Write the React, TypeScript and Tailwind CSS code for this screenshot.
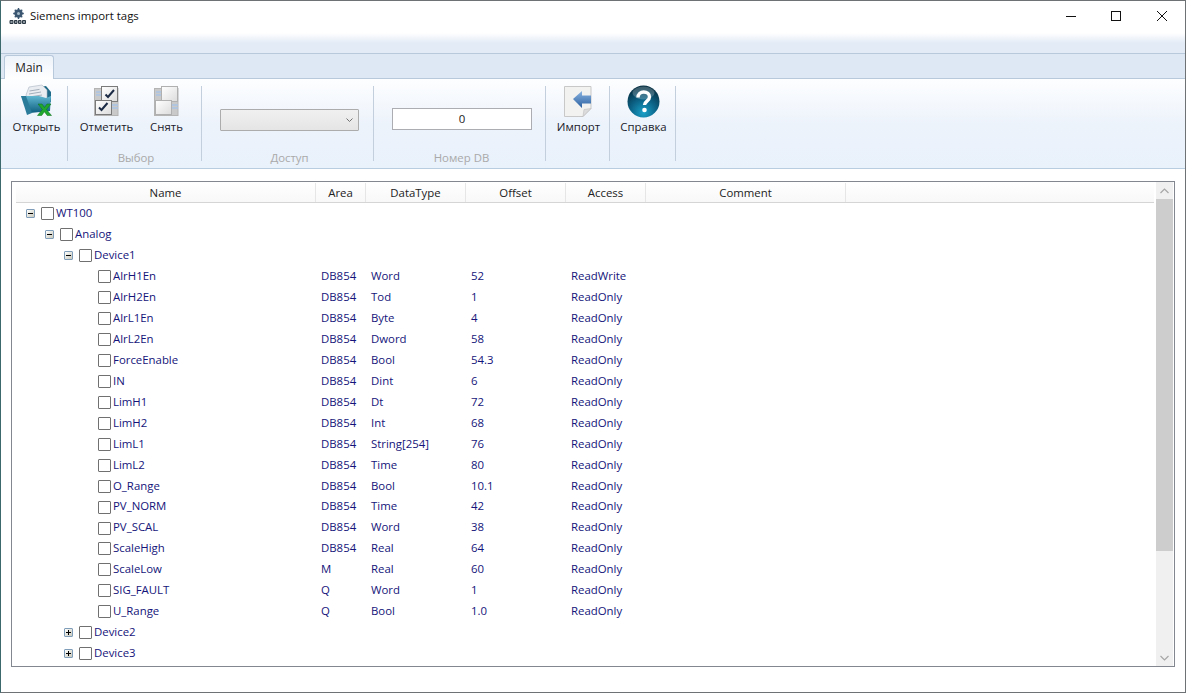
import type { ReactNode } from 'react';

type TagRow = { name: string; area: string; type: string; offset: string; access: string };

const tags: TagRow[] = [
  { name: 'AlrH1En', area: 'DB854', type: 'Word', offset: '52', access: 'ReadWrite' },
  { name: 'AlrH2En', area: 'DB854', type: 'Tod', offset: '1', access: 'ReadOnly' },
  { name: 'AlrL1En', area: 'DB854', type: 'Byte', offset: '4', access: 'ReadOnly' },
  { name: 'AlrL2En', area: 'DB854', type: 'Dword', offset: '58', access: 'ReadOnly' },
  { name: 'ForceEnable', area: 'DB854', type: 'Bool', offset: '54.3', access: 'ReadOnly' },
  { name: 'IN', area: 'DB854', type: 'Dint', offset: '6', access: 'ReadOnly' },
  { name: 'LimH1', area: 'DB854', type: 'Dt', offset: '72', access: 'ReadOnly' },
  { name: 'LimH2', area: 'DB854', type: 'Int', offset: '68', access: 'ReadOnly' },
  { name: 'LimL1', area: 'DB854', type: 'String[254]', offset: '76', access: 'ReadOnly' },
  { name: 'LimL2', area: 'DB854', type: 'Time', offset: '80', access: 'ReadOnly' },
  { name: 'O_Range', area: 'DB854', type: 'Bool', offset: '10.1', access: 'ReadOnly' },
  { name: 'PV_NORM', area: 'DB854', type: 'Time', offset: '42', access: 'ReadOnly' },
  { name: 'PV_SCAL', area: 'DB854', type: 'Word', offset: '38', access: 'ReadOnly' },
  { name: 'ScaleHigh', area: 'DB854', type: 'Real', offset: '64', access: 'ReadOnly' },
  { name: 'ScaleLow', area: 'M', type: 'Real', offset: '60', access: 'ReadOnly' },
  { name: 'SIG_FAULT', area: 'Q', type: 'Word', offset: '1', access: 'ReadOnly' },
  { name: 'U_Range', area: 'Q', type: 'Bool', offset: '1.0', access: 'ReadOnly' },
];

const columns = 'grid grid-cols-[300px_50px_100px_100px_80px_200px]';

function AppLogo() {
  return (
    <svg width="18" height="17" viewBox="0 0 18 17">
      <circle cx="9.5" cy="5.5" r="4.2" fill="#3a5670" />
      <circle cx="9.5" cy="5.5" r="1.5" fill="#a9bccb" />
      <path d="M9.5 0v2M9.5 9v2M4.200 5.500h2M12.800 5.500h2M5.800 1.800l1.400 1.400M11.800 7.800l1.400 1.400M13.200 1.800L11.800 3.200M7.200 7.800L5.800 9.200" stroke="#3a5670" strokeWidth="1.400" />
      <path d="M1 12.500h3v3H1zM5.500 12.500h2.500v3H5.500zM9.500 12.500h2.500v3H9.500zM13.500 12.500h3v3h-3z" fill="#8b959d" stroke="#2c3a46" strokeWidth="1" />
    </svg>
  );
}

function OpenIcon() {
  return (
    <svg width="34" height="34" viewBox="0 0 34 34">
      <defs>
        <linearGradient id="fold" x1="0" y1="0" x2="0" y2="1">
          <stop offset="0" stopColor="#5fb6cf" />
          <stop offset="1" stopColor="#0f5f80" />
        </linearGradient>
      </defs>
      <path d="M12 11L15 4l11 -2 5 6v10H14z" fill="#1e6a88" />
      <path d="M6 11l3-8 13-2 5 5 0 13H10z" fill="#e9edf2" stroke="#aab4bf" strokeWidth="0.6" />
      <path d="M9.500 7l10-1.600M9 10l12-2M9 13l13-2" stroke="#9aa6b3" strokeWidth="0.9" />
      <path d="M1 12l18 0 7 2 5-2 -1 15-20 2z" fill="url(#fold)" />
      <path d="M1 12l6 19 5-2L6 12z" fill="#2b7c9b" />
      <path d="M18 20h4l2.500 3.500L27 20h4l-4.500 5.500L31.500 31.500h-4.300l-2.800-3.700-2.700 3.700H17.500l4.800-6z" fill="#1fa82d" stroke="#0d6d1b" strokeWidth="0.5" />
    </svg>
  );
}

function CheckAllIcon({ checked }: { checked: boolean }) {
  const id = checked ? 'bxa' : 'bxb';
  return (
    <svg width="25" height="30" viewBox="0 0 25 30" className="mb-[2px]">
      <defs>
        <linearGradient id={id} x1="0" y1="0" x2="1" y2="1">
          <stop offset="0" stopColor="#ffffff" />
          <stop offset="1" stopColor="#dcdcdc" />
        </linearGradient>
      </defs>
      <rect x="0.500" y="2.500" width="23.500" height="27" fill="#c9c9c9" stroke="#b4b4b4" />
      <path d="M2 6h5M2 9h5M18 19h6M18 22h6" stroke="#a9c4e6" strokeWidth="1.600" />
      <rect x="7.500" y="0.500" width="16" height="15" fill={`url(#${id})`} stroke={checked ? '#7a7a7a' : '#b0b0b0'} />
      <rect x="1.500" y="14.500" width="16" height="14" fill={`url(#${id})`} stroke={checked ? '#7a7a7a' : '#b0b0b0'} />
      {checked && (
        <>
          <path d="M11.500 8.500l2.500 2.500 6-7" fill="none" stroke="#1c2b45" strokeWidth="2" />
          <path d="M5 21.500l2.500 2.500 6-7" fill="none" stroke="#1c2b45" strokeWidth="2" />
        </>
      )}
    </svg>
  );
}

function ImportIcon() {
  return (
    <svg width="29" height="31" viewBox="0 0 29 31" className="mb-[1px]">
      <defs>
        <linearGradient id="arrow" x1="0" y1="0" x2="0" y2="1">
          <stop offset="0" stopColor="#8ab4e2" />
          <stop offset="1" stopColor="#2a5f9e" />
        </linearGradient>
      </defs>
      <path d="M0.500 0.500h26.500v22l-8 8H0.500z" fill="#f2f2f0" stroke="#c8c8c8" />
      <path d="M19 30.500l1-7 7-1z" fill="#dcdcdc" stroke="#bdbdbd" strokeWidth="0.600" />
      <path d="M9 13l9-8v4.500h9v8h-9V22z" fill="url(#arrow)" />
    </svg>
  );
}

function HelpIcon() {
  return (
    <svg width="33" height="33" viewBox="0 0 33 33">
      <defs>
        <radialGradient id="globe" cx="0.500" cy="0.850" r="0.800">
          <stop offset="0" stopColor="#1aa0c8" />
          <stop offset="0.550" stopColor="#0b5f82" />
          <stop offset="1" stopColor="#063043" />
        </radialGradient>
      </defs>
      <circle cx="16.500" cy="16.500" r="16" fill="url(#globe)" />
      <ellipse cx="16.500" cy="8" rx="11" ry="6.500" fill="#ffffff" opacity="0.220" />
      <path d="M11 12.500c0-3.500 2.500-5.500 5.700-5.500 3.300 0 5.800 2 5.800 5 0 4-5 4.200-5 8" fill="none" stroke="#ffffff" strokeWidth="3.400" />
      <circle cx="17.500" cy="25" r="2.300" fill="#ffffff" />
    </svg>
  );
}

function Expander({ open }: { open: boolean }) {
  return (
    <span className="flex h-[9px] w-[9px] shrink-0 items-center justify-center rounded-[1px] border border-[#7f9db9] bg-gradient-to-br from-[#ffffff] to-[#c9c9bd]">
      <span className="relative block h-[1px] w-[5px] bg-black">
        {!open && <span className="absolute left-[2px] top-[-2px] block h-[5px] w-[1px] bg-black" />}
      </span>
    </span>
  );
}

function Check() {
  return <span className="block h-[13px] w-[13px] shrink-0 rounded-[1px] border border-[#707070] bg-white" />;
}

function BranchRow({ label, indent, open }: { label: string; indent: string; open: boolean }) {
  return (
    <div className={`flex h-[20.969px] items-center ${indent}`}>
      <Expander open={open} />
      <span className="ml-[6px]"><Check /></span>
      <span className="ml-[2px] pb-[2px] text-[#14147a]">{label}</span>
    </div>
  );
}

function LeafRow({ tag }: { tag: TagRow }) {
  return (
    <div className={`${columns} h-[20.969px] items-center text-[#14147a]`}>
      <div className="flex items-center pl-[82px]">
        <Check />
        <span className="ml-[2px] pb-[2px]">{tag.name}</span>
      </div>
      <div className="pb-[2px] pl-[5px]">{tag.area}</div>
      <div className="pb-[2px] pl-[5px]">{tag.type}</div>
      <div className="pb-[2px] pl-[5px]">{tag.offset}</div>
      <div className="pb-[2px] pl-[5px]">{tag.access}</div>
    </div>
  );
}

function RibbonGroup({ width, label, children }: { width: string; label?: string; children: ReactNode }) {
  return (
    <div className={`flex h-[75px] flex-col border-r border-[#c3cfdc] ${width}`}>
      <div className="flex h-[66px] items-start justify-center">{children}</div>
      <div className="h-[9px] text-center leading-[12px] text-[#a9a9a9]">{label}</div>
    </div>
  );
}

function RibbonButton({ icon, label, width }: { icon: ReactNode; label: string; width: string }) {
  return (
    <div className={`-mt-[2px] flex flex-col items-center ${width}`}>
      <div className="flex h-[34px] items-end justify-center">{icon}</div>
      <div className="mt-[1px] whitespace-nowrap leading-[16px] text-[#1a1a2a]">{label}</div>
    </div>
  );
}

export default function App() {
  return (
    <div className="flex h-[693px] w-[1186px] flex-col overflow-hidden border border-[#6f7275] border-l-[#3c6a6c] bg-white font-['Open_Sans',sans-serif] text-[11.4px]">
      {/* Title bar */}
      <div className="flex h-[32px] shrink-0 items-center bg-white pb-[2px] pl-[8px]">
        <AppLogo />
        <span className="ml-[3px] text-[11.4px] text-[#111111]">Siemens import tags</span>
        <div className="ml-auto mr-[17px] flex items-center">
          <svg width="102" height="12" viewBox="0 0 102 12">
            <path d="M0 6.500h10" stroke="#111" />
            <rect x="45.500" y="1.500" width="9" height="9" fill="none" stroke="#111" />
            <path d="M91 1l10 10M101 1L91 11" stroke="#111" />
          </svg>
        </div>
      </div>
      <div className="h-[21px] shrink-0 border-b border-[#b9c9dc] bg-gradient-to-b from-[#ffffff] to-[#e3ebf6] to-50%" />

      {/* Tab strip */}
      <div className="flex h-[25px] shrink-0 items-end border-b border-[#b9c9dc] bg-[#dee8f5] pl-[3px]">
        <div className="mb-[-1px] flex h-[24px] w-[50px] items-center justify-center rounded-t-[3px] border border-b-0 border-[#b9c9dc] bg-gradient-to-b from-[#edf3fa] to-white pt-[1px] text-[11.8px] text-[#222]">
          Main
        </div>
      </div>

      {/* Ribbon */}
      <div className="flex h-[90px] shrink-0 items-start border-b border-[#b9cde0] bg-gradient-to-b from-[#fdfeff] via-[#edf3fb] via-50% to-[#e9f1fb] pl-[1px] pt-[7px]">
        <RibbonGroup width="w-[66px] pl-[4px]">
          <RibbonButton width="w-[60px]" icon={<OpenIcon />} label="Открыть" />
        </RibbonGroup>
        <RibbonGroup width="w-[134px] pl-[3px]" label="Выбор">
          <div className="flex pr-[11px]">
            <RibbonButton width="w-[72px]" icon={<CheckAllIcon checked />} label="Отметить" />
            <RibbonButton width="w-[48px]" icon={<CheckAllIcon checked={false} />} label="Снять" />
          </div>
        </RibbonGroup>
        <RibbonGroup width="w-[172px] pl-[4px]" label="Доступ">
          <div className="mt-[23px] flex h-[22px] w-[139px] items-center justify-end rounded-[1px] border border-[#acacac] bg-gradient-to-b from-[#f0f0f0] to-[#e5e5e5] pr-[5px]">
            <svg width="7" height="4" viewBox="0 0 7 4"><path d="M0.500 0.500L3.500 3.500l3-3" fill="none" stroke="#707070" /></svg>
          </div>
        </RibbonGroup>
        <RibbonGroup width="w-[172px] pl-[4px]" label="Номер DB">
          <div className="mt-[22px] flex h-[22px] w-[140px] items-center justify-center border border-[#abadb3] bg-white pl-[1px] text-[#222]">0</div>
        </RibbonGroup>
        <RibbonGroup width="w-[64px] pl-[2px]">
          <RibbonButton width="w-[60px]" icon={<ImportIcon />} label="Импорт" />
        </RibbonGroup>
        <RibbonGroup width="w-[66px] pl-[2px]">
          <RibbonButton width="w-[60px]" icon={<HelpIcon />} label="Справка" />
        </RibbonGroup>
      </div>

      {/* Tag table */}
      <div className="flex flex-1 flex-col px-[10px] pb-[25px] pt-[12px]">
        <div className="flex h-[486px] border border-[#828790] pl-[4px]">
          <div className="min-w-0 flex-1 overflow-hidden">
            <div className={`${columns} h-[21px] items-center border-b border-[#d5d5d5] bg-gradient-to-b from-white to-[#f8f8f8] pt-[1px] text-center text-[#222]`}>
              <div className="border-r border-[#e6e6e6] leading-[19px]">Name</div>
              <div className="border-r border-[#e6e6e6] leading-[19px]">Area</div>
              <div className="border-r border-[#e6e6e6] leading-[19px]">DataType</div>
              <div className="border-r border-[#e6e6e6] leading-[19px]">Offset</div>
              <div className="border-r border-[#e6e6e6] leading-[19px]">Access</div>
              <div className="border-r border-[#e6e6e6] leading-[19px]">Comment</div>
            </div>
            <BranchRow label="WT100" indent="pl-[10px]" open />
            <BranchRow label="Analog" indent="pl-[29px]" open />
            <BranchRow label="Device1" indent="pl-[48px]" open />
            {tags.map((t) => <LeafRow key={t.name} tag={t} />)}
            <BranchRow label="Device2" indent="pl-[48px]" open={false} />
            <BranchRow label="Device3" indent="pl-[48px]" open={false} />
          </div>

          {/* Scrollbar */}
          <div className="ml-[2px] mr-[1px] flex w-[17px] shrink-0 flex-col bg-[#f0f0f0]">
            <div className="flex h-[17px] items-center justify-center">
              <svg width="9" height="6" viewBox="0 0 9 6"><path d="M0.500 5L4.500 1l4 4" fill="none" stroke="#a6a6a6" strokeWidth="1.200" /></svg>
            </div>
            <div className="h-[352px] bg-[#cdcdcd]" />
            <div className="mt-auto flex h-[17px] items-center justify-center">
              <svg width="9" height="6" viewBox="0 0 9 6"><path d="M0.500 1l4 4 4-4" fill="none" stroke="#a6a6a6" strokeWidth="1.200" /></svg>
            </div>
          </div>
        </div>
      </div>
    </div>
  );
}
